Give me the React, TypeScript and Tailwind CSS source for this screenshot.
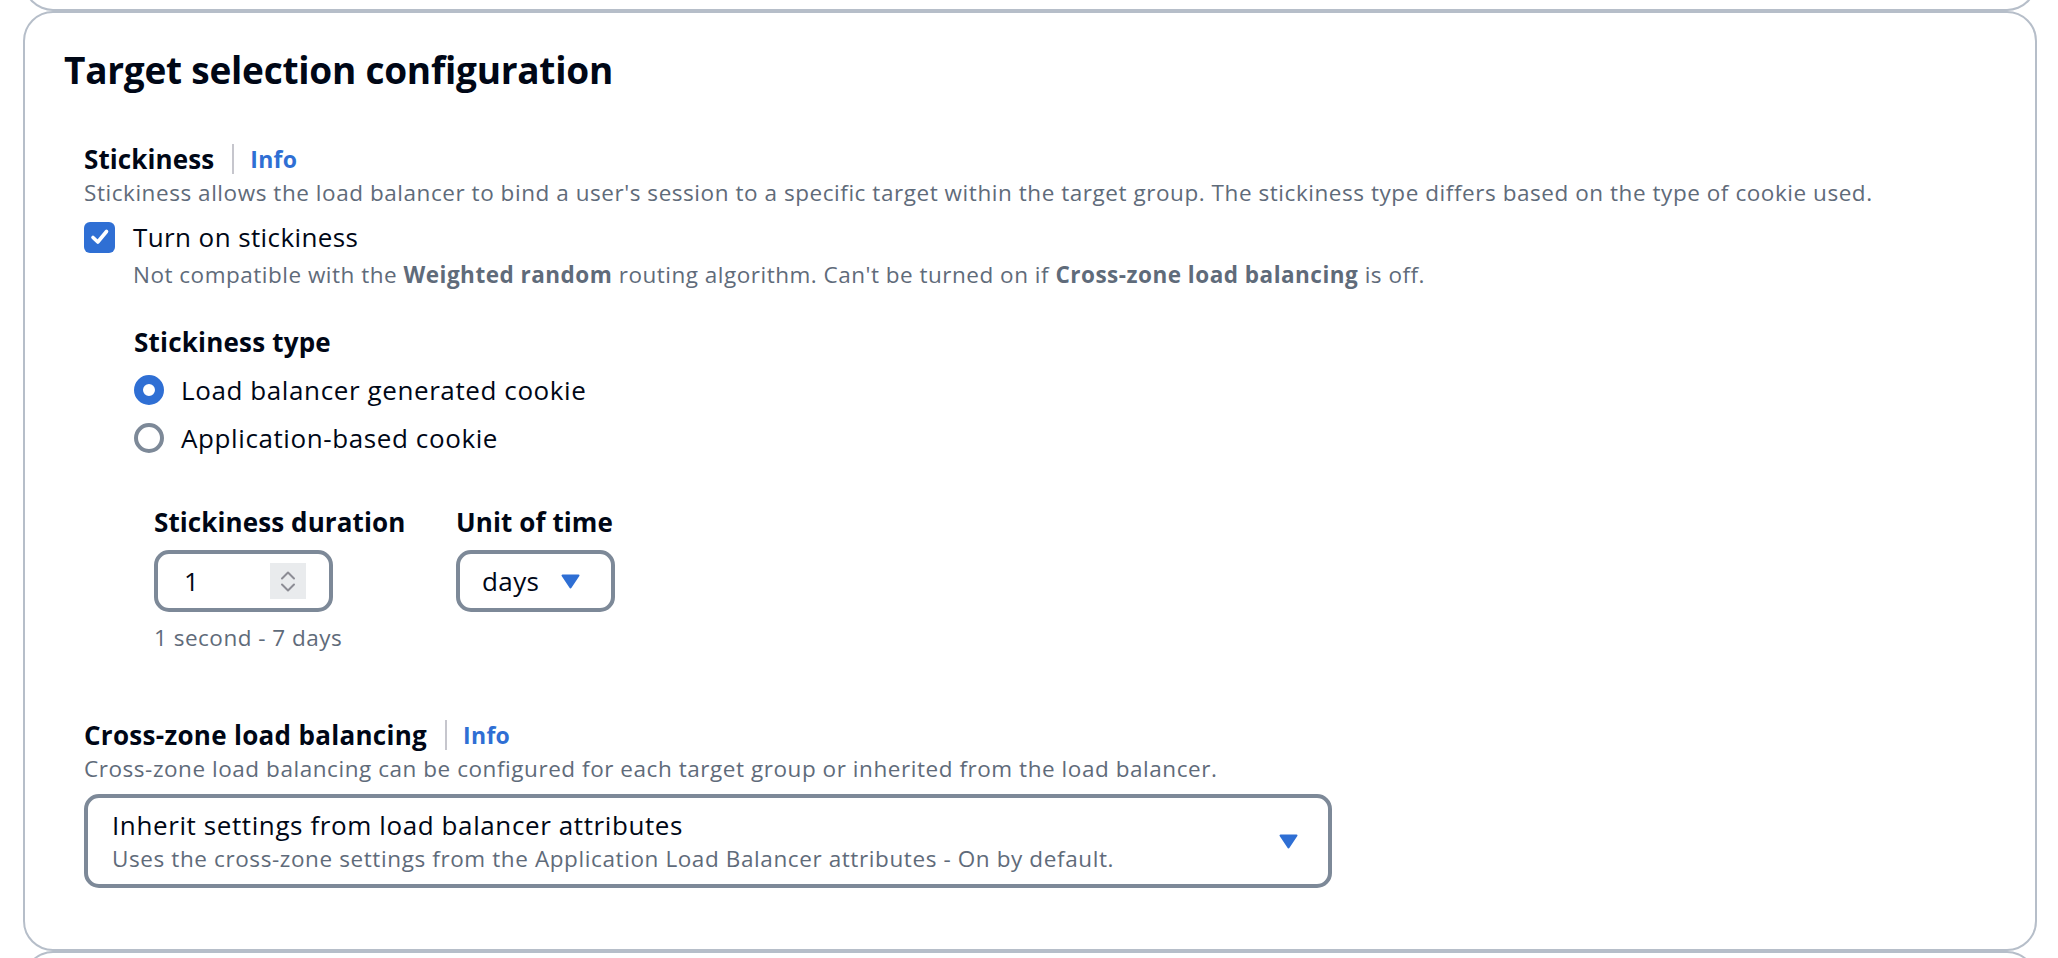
import React from 'react';

const FONT = "font-['Open_Sans','Liberation_Sans',sans-serif]";

function InfoLink() {
  return (
    <>
      <span className="ml-[18px] mr-[16px] h-[30px] w-[2px] bg-[#c6c6cd]" />
      <span className="text-[23px] font-bold tracking-[0.3px] text-[#2f6fd4]">Info</span>
    </>
  );
}

function Caret() {
  return (
    <svg width="19" height="15" viewBox="0 0 19 15" aria-hidden="true">
      <path d="M1.5 1.5 H17.5 L9.5 13.5 Z" fill="#2f6fd4" stroke="#2f6fd4" strokeWidth="2" strokeLinejoin="round" />
    </svg>
  );
}

function Radio({ checked, label }: { checked?: boolean; label: string }) {
  return (
    <div className="flex h-[40px] items-center">
      {checked ? (
        <span className="box-border h-[30px] w-[30px] rounded-full border-[9px] border-[#2f6fd4] bg-white" />
      ) : (
        <span className="box-border h-[30px] w-[30px] rounded-full border-[4px] border-[#7d8998] bg-white" />
      )}
      <span className="ml-[17px] text-[26px] leading-[36px] tracking-[0.6px] text-[#000716]">{label}</span>
    </div>
  );
}

export default function App() {
  return (
    <div className={`h-screen overflow-hidden bg-white ${FONT}`}>
      {/* bottom edge of the previous container */}
      <div className="-mt-[30px] ml-[23px] mr-[21px] h-[41px] rounded-b-[30px] border-2 border-t-0 border-[#b6bec9]" />

      <section className="ml-[23px] mr-[21px] h-[940px] rounded-[30px] border-2 border-[#b6bec9] bg-white pl-[39px] pt-[33px]">
        <h2 className="text-[37px] font-bold leading-[48px] tracking-[-0.25px] text-[#000716]">Target selection configuration</h2>

        <div className="ml-[20px] mt-[47px]">
          {/* Stickiness */}
          <div className="flex h-[36px] items-center">
            <span className="text-[26px] font-bold tracking-[0.1px] text-[#000716]">Stickiness</span>
            <InfoLink />
          </div>
          <p className="text-[22.5px] leading-[32px] tracking-[0.55px] text-[#5f6b7a]">
            Stickiness allows the load balancer to bind a user's session to a specific target within the target group. The stickiness type differs based on the type of cookie used.
          </p>

          <div className="mt-[8px] flex h-[40px] items-center">
            <span className="flex h-[31px] w-[31px] items-center justify-center rounded-[6px] bg-[#2f6fd4]">
              <svg width="22" height="22" viewBox="0 0 22 22" aria-hidden="true">
                <path d="M4 11.5 L8.8 16 L17.5 5.5" fill="none" stroke="white" strokeWidth="3.6" strokeLinecap="round" strokeLinejoin="round" />
              </svg>
            </span>
            <span className="ml-[18px] text-[26px] leading-[36px] tracking-[0.4px] text-[#000716]">Turn on stickiness</span>
          </div>
          <p className="ml-[49px] mt-[2px] text-[22.5px] leading-[32px] tracking-[0.5px] text-[#5f6b7a]">
            Not compatible with the <b className="font-bold">Weighted random</b> routing algorithm. Can't be turned on if{' '}
            <b className="font-bold">Cross-zone load balancing</b> is off.
          </p>

          <div className="ml-[50px] mt-[33px]">
            <div className="h-[36px] text-[26px] font-bold leading-[36px] tracking-[0.2px] text-[#000716]">Stickiness type</div>
            <div className="mt-[10px] flex flex-col gap-[8px]">
              <Radio checked label="Load balancer generated cookie" />
              <Radio label="Application-based cookie" />
            </div>

            <div className="ml-[20px] mt-[46px] flex">
              <div className="w-[302px]">
                <div className="h-[36px] whitespace-nowrap text-[26px] font-bold leading-[36px] tracking-[0.1px] text-[#000716]">Stickiness duration</div>
                <div className="mt-[10px] flex h-[62px] w-[179px] items-center rounded-[15px] border-4 border-[#7d8998] pl-[26px] pr-[23px]">
                  <span className="flex-1 text-[26px] text-[#000716]">1</span>
                  <span className="flex h-[36px] w-[36px] flex-col items-center justify-center gap-[3px] bg-[#e9ebed]">
                    <svg width="16" height="9" viewBox="0 0 16 9" aria-hidden="true">
                      <path d="M2 7.5 L8 1.5 L14 7.5" fill="none" stroke="#8c8c94" strokeWidth="2" strokeLinecap="round" strokeLinejoin="round" />
                    </svg>
                    <svg width="16" height="9" viewBox="0 0 16 9" aria-hidden="true">
                      <path d="M2 1.5 L8 7.5 L14 1.5" fill="none" stroke="#8c8c94" strokeWidth="2" strokeLinecap="round" strokeLinejoin="round" />
                    </svg>
                  </span>
                </div>
                <div className="mt-[10px] h-[32px] whitespace-nowrap text-[22.5px] leading-[32px] tracking-[0.5px] text-[#5f6b7a]">1 second - 7 days</div>
              </div>
              <div>
                <div className="h-[36px] whitespace-nowrap text-[26px] font-bold leading-[36px] tracking-[0.1px] text-[#000716]">Unit of time</div>
                <div className="mt-[10px] flex h-[62px] w-[159px] items-center rounded-[15px] border-4 border-[#7d8998] pl-[22px] pr-[31px]">
                  <span className="flex-1 text-[26px] tracking-[0.4px] text-[#000716]">days</span>
                  <Caret />
                </div>
              </div>
            </div>
          </div>

          {/* Cross-zone */}
          <div className="mt-[63px] flex h-[36px] items-center">
            <span className="text-[26px] font-bold tracking-[0.3px] text-[#000716]">Cross-zone load balancing</span>
            <InfoLink />
          </div>
          <p className="text-[22.5px] leading-[32px] tracking-[0.55px] text-[#5f6b7a]">
            Cross-zone load balancing can be configured for each target group or inherited from the load balancer.
          </p>
          <div className="mt-[9px] flex h-[94px] w-[1248px] items-center rounded-[15px] border-4 border-[#7d8998] pl-[24px] pr-[30px]">
            <div className="flex-1">
              <div className="text-[26px] leading-[36px] tracking-[0.6px] text-[#000716]">Inherit settings from load balancer attributes</div>
              <div className="text-[22.5px] leading-[32px] tracking-[0.6px] text-[#5f6b7a]">
                Uses the cross-zone settings from the Application Load Balancer attributes - On by default.
              </div>
            </div>
            <Caret />
          </div>
        </div>
      </section>

      {/* top edge of the next container */}
      <div className="ml-[23px] mr-[21px] h-[60px] rounded-t-[30px] border-2 border-b-0 border-[#b6bec9]" />
    </div>
  );
}
